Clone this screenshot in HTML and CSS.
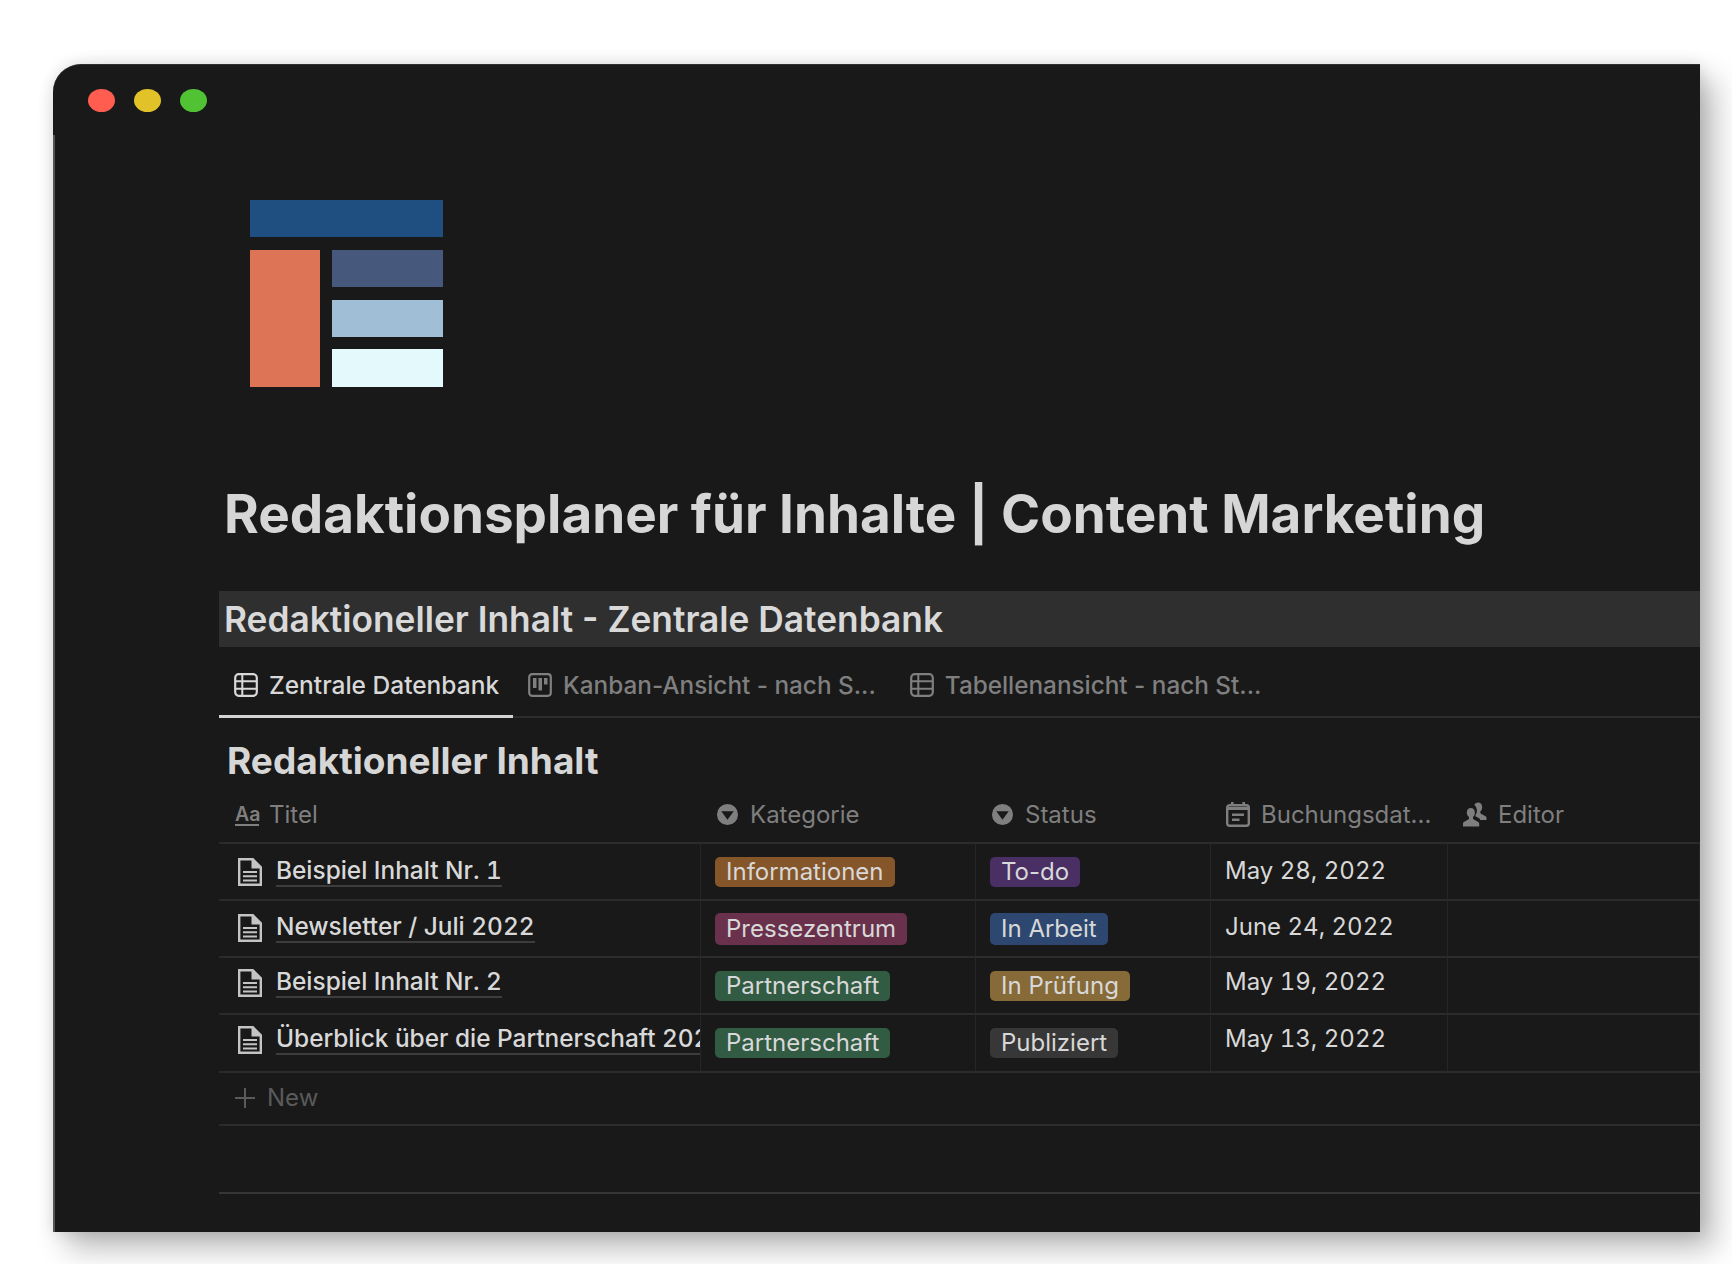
FILE: index.html
```html
<!DOCTYPE html>
<html lang="de">
<head>
    <meta charset="UTF-8">
    <title>Redaktionsplaner</title>
    <link rel="stylesheet" href="styles.css">
</head>
<body>
    <div class="window">
        <div class="titlebar">
            <span class="dot red"></span>
            <span class="dot yellow"></span>
            <span class="dot green"></span>
        </div>
        <div class="page">
            <svg class="logo" width="193" height="187" viewBox="0 0 193 187">
                <rect x="0" y="0" width="193" height="37" fill="#1f4e80"/>
                <rect x="0" y="50" width="70" height="137" fill="#dd7455"/>
                <rect x="82" y="50" width="111" height="37" fill="#46597c"/>
                <rect x="82" y="100" width="111" height="37" fill="#a0bfd7"/>
                <rect x="82" y="149" width="111" height="38" fill="#e3f9fc"/>
            </svg>
            <h1 class="title">Redaktionsplaner für Inhalte | Content Marketing</h1>
            <h2 class="band">Redaktioneller Inhalt - Zentrale Datenbank</h2>

            <div class="tabs">
                <div class="tab active">
                    <svg class="icon" width="24" height="24" viewBox="0 0 24 24"><use href="#table"/></svg>
                    Zentrale Datenbank
                </div>
                <div class="tab">
                    <svg class="icon" width="24" height="24" viewBox="0 0 24 24">
                        <rect x="1.200" y="1.200" width="21.600" height="21.600" rx="3" fill="none" stroke="currentColor" stroke-width="2.200"/>
                        <path d="M5 5h3.500v10H5zM10.500 5H14v12.500h-3.500zM16 5h3.500v6.500H16z" fill="currentColor"/>
                    </svg>
                    Kanban-Ansicht - nach S...
                </div>
                <div class="tab">
                    <svg class="icon" width="24" height="24" viewBox="0 0 24 24"><use href="#table"/></svg>
                    Tabellenansicht - nach St...
                </div>
            </div>

            <h3 class="dbtitle">Redaktioneller Inhalt</h3>

            <div class="row head">
                <div class="hcell first"><span class="aa">Aa</span>Titel</div>
                <div class="hcell"><svg class="icon" width="23" height="23" viewBox="0 0 24 24"><use href="#select"/></svg>Kategorie</div>
                <div class="hcell"><svg class="icon" width="23" height="23" viewBox="0 0 24 24"><use href="#select"/></svg>Status</div>
                <div class="hcell">
                    <svg class="icon" width="24" height="25" viewBox="0 0 24 25">
                        <rect x="1.200" y="3.200" width="21.600" height="20.600" rx="2.500" fill="none" stroke="currentColor" stroke-width="2.400"/>
                        <path d="M1.200 5h21.600v3H1.200zM5 0h2.600v4H5zM16.400 0H19v4h-2.600zM6 11.500h12v2.400H6zM6 16.500h7.500v2.400H6z" fill="currentColor"/>
                    </svg>Buchungsdat...
                </div>
                <div class="hcell">
                    <svg class="icon" width="24" height="25" viewBox="0 0 24 25">
                        <path d="M15 0.500c2.500 0 4.200 2 4.200 4.700 0 1.800-.8 3.300-1.900 4.200v1.300c0 .8 1 1.300 3 2.200 2 .9 3.200 1.500 3.200 3.100V18h-6.200c-.6-1.800-2.300-2.600-4.500-3.500l-.4-.2v-1.100c1-1.200 1.500-2.900 1.500-4.600 0-2.300-.8-4.400-2.600-5.600C12 1.500 13.300 0.500 15 0.500z" fill="currentColor"/>
                        <path d="M7.800 6c2.500 0 4.100 2.100 4.100 4.700 0 1.900-.8 3.500-1.900 4.400v1.400c0 .8 1 1.300 3 2.200 2 .9 3.200 1.500 3.200 3.100V24.500H0v-2.700c0-1.600 1.100-2.200 3.100-3.100 2-.9 2.900-1.400 2.900-2.200v-1.400C4.800 14.200 3.800 12.600 3.800 10.700 3.800 8.100 5.300 6 7.800 6z" fill="currentColor"/>
                    </svg>Editor
                </div>
            </div>

            <div class="row">
                <div class="cell name"><svg class="doc" width="24" height="28" viewBox="0 0 24 28"><use href="#doc"/></svg><span class="link">Beispiel Inhalt Nr. 1</span></div>
                <div class="cell"><span class="tag brown">Informationen</span></div>
                <div class="cell"><span class="tag purple">To-do</span></div>
                <div class="cell date">May 28, 2022</div>
                <div class="cell"></div>
            </div>
            <div class="row tall">
                <div class="cell name"><svg class="doc" width="24" height="28" viewBox="0 0 24 28"><use href="#doc"/></svg><span class="link">Newsletter / Juli 2022</span></div>
                <div class="cell"><span class="tag pink">Pressezentrum</span></div>
                <div class="cell"><span class="tag blue">In Arbeit</span></div>
                <div class="cell date">June 24, 2022</div>
                <div class="cell"></div>
            </div>
            <div class="row high">
                <div class="cell name"><svg class="doc" width="24" height="28" viewBox="0 0 24 28"><use href="#doc"/></svg><span class="link">Beispiel Inhalt Nr. 2</span></div>
                <div class="cell"><span class="tag green-tag">Partnerschaft</span></div>
                <div class="cell"><span class="tag gold">In Prüfung</span></div>
                <div class="cell date">May 19, 2022</div>
                <div class="cell"></div>
            </div>
            <div class="row high last">
                <div class="cell name"><svg class="doc" width="24" height="28" viewBox="0 0 24 28"><use href="#doc"/></svg><span class="link">Überblick über die Partnerschaft 2022</span></div>
                <div class="cell"><span class="tag green-tag">Partnerschaft</span></div>
                <div class="cell"><span class="tag gray">Publiziert</span></div>
                <div class="cell date">May 13, 2022</div>
                <div class="cell"></div>
            </div>

            <div class="newrow">
                <svg class="plus" width="20" height="20" viewBox="0 0 20 20"><path d="M9 0h2v9h9v2h-9v9H9v-9H0V9h9z" fill="currentColor"/></svg>
                New
            </div>
            <div class="endline"></div>
        </div>
    </div>

    <svg class="defs" width="0" height="0">
        <defs>
            <g id="table">
                <rect x="1.200" y="1.200" width="21.600" height="21.600" rx="3.500" fill="none" stroke="currentColor" stroke-width="2.200"/>
                <path d="M1.200 8.300h21.600M1.200 15.700h21.600M8.300 1.200v21.600" fill="none" stroke="currentColor" stroke-width="2"/>
            </g>
            <g id="select">
                <path fill-rule="evenodd" d="M12 1a11 11 0 1 0 0 22a11 11 0 0 0 0-22zM5.500 8.500h13L12 17.500z" fill="currentColor"/>
            </g>
            <g id="doc">
                <path d="M1.200 1.200h13.600l8 8v17.600H1.200z" fill="none" stroke="currentColor" stroke-width="2.400"/>
                <path d="M13.500 1.200h2L23 9v1.500h-9.500z" fill="currentColor"/>
                <path d="M5 14h14M5 18.200h14M5 22.400h14" fill="none" stroke="currentColor" stroke-width="2"/>
            </g>
        </defs>
    </svg>
</body>
</html>
```

FILE: styles.css
```css
* {
    margin: 0;
    padding: 0;
    box-sizing: border-box;
}

body {
    background: #fff;
    font-family: Inter, "Liberation Sans", sans-serif;
    overflow: hidden;
    height: 1264px;
}

.defs {
    position: absolute;
}

.window {
    position: relative;
    width: 1647px;
    height: 1168px;
    margin: 64px 0 0 53px;
    background: #191919;
    border-top: 1px solid #2e2e2e;
    border-radius: 28px 0 0 0;
    overflow: hidden;
    box-shadow: 14px 16px 30px rgba(0, 0, 0, 0.28), 0 0 16px rgba(0, 0, 0, 0.12);
}

/* light edge on the left, below the corner */
.window::before {
    content: "";
    position: absolute;
    left: 0;
    top: 70px;
    bottom: 0;
    width: 2px;
    background: #555;
}

.titlebar {
    display: flex;
    gap: 19px;
    padding: 24px 0 0 35px;
    height: 135px;
}

.dot {
    width: 27px;
    height: 23px;
    border-radius: 50%;
}

.red { background: #fe5d50; }
.yellow { background: #e2c229; }
.green { background: #50c234; }

.page {
    padding-left: 166px;
}

.logo {
    display: block;
    margin-left: 31px;
}

.title {
    margin: 91px 0 0 5px;
    font-size: 53px;
    line-height: 72px;
    font-weight: 700;
    color: #d6d6d6;
    white-space: nowrap;
}

.band {
    height: 56px;
    margin-top: 41px;
    padding-left: 5px;
    background: #2f2f2f;
    color: #d9d9d9;
    font-size: 35.300px;
    line-height: 58px;
    font-weight: 600;
    white-space: nowrap;
}

.tabs {
    display: flex;
    height: 71px;
    border-bottom: 2px solid #2b2b2b;
    color: #7f7f7f;
    font-size: 24.300px;
    font-weight: 500;
}

.tab {
    display: flex;
    align-items: center;
    height: 71px;
    gap: 11px;
    padding: 8px 19px 0 15px;
    border-bottom: 3px solid transparent;
    white-space: nowrap;
}

.tab.active {
    padding-right: 14px;
    font-size: 24.500px;
    color: #d8d8d8;
    border-bottom-color: #d4d4d4;
}

.icon {
    flex: none;
}

.dbtitle {
    margin: 20px 0 0 8px;
    font-size: 37px;
    line-height: 46px;
    font-weight: 700;
    color: #d6d6d6;
}

.row {
    display: grid;
    grid-template-columns: 482px 275px 235px 237px 1fr;
    height: 57px;
    border-bottom: 2px solid #2b2b2b;
}

.row.last {
    height: 58px;
}

.row.head {
    height: 58px;
    margin-top: 2px;
    color: #7f7f7f;
    font-size: 24px;
}

.hcell {
    display: flex;
    align-items: center;
    gap: 11px;
    padding: 1px 0 0 15px;
    white-space: nowrap;
}

.hcell.first {
    gap: 10px;
    padding-left: 16px;
}

.aa {
    width: 24px;
    font-size: 19.500px;
    line-height: 20px;
    font-weight: 600;
    border-bottom: 2px solid #7f7f7f;
    text-align: center;
}

.cell {
    display: flex;
    align-items: center;
    padding-left: 14px;
    border-right: 1px solid #262626;
    overflow: hidden;
    white-space: nowrap;
    color: #d8d8d8;
    font-size: 24px;
}

.cell.name {
    gap: 14px;
    padding: 0 0 0 19px;
    font-size: 24.400px;
    font-weight: 500;
    font-variant-numeric: tabular-nums;
}

.doc {
    flex: none;
    color: #c4c4c4;
}

.link {
    border-bottom: 2px solid #3d3d3d;
    line-height: 29px;
    margin-top: -1px;
}

.date {
    padding-bottom: 3px;
    font-variant-numeric: tabular-nums;
}

.row.tall .name {
    padding-bottom: 2px;
}

.row.tall .date {
    padding-bottom: 5px;
}

.row.high .name {
    padding-bottom: 6px;
}

.row.high .date {
    padding-bottom: 9px;
}

.tag {
    display: block;
    height: 30px;
    padding: 0 11px;
    line-height: 30px;
    border-radius: 5px;
    font-size: 24px;
}

.row.tall .tag {
    height: 32px;
    line-height: 32px;
}

.brown { background: #85562a; }
.purple { background: #492f64; }
.pink { background: #69314c; }
.blue { background: #2d4770; }
.green-tag { background: #315b42; }
.gold { background: #866a38; }
.gray { background: #373737; }

.newrow {
    display: flex;
    align-items: center;
    gap: 12px;
    height: 53px;
    padding: 0 0 2px 16px;
    border-bottom: 2px solid #2b2b2b;
    color: #5a5a5a;
    font-size: 24px;
}

.plus {
    flex: none;
}

.endline {
    height: 2px;
    margin-top: 66px;
    background: #363636;
}
```
